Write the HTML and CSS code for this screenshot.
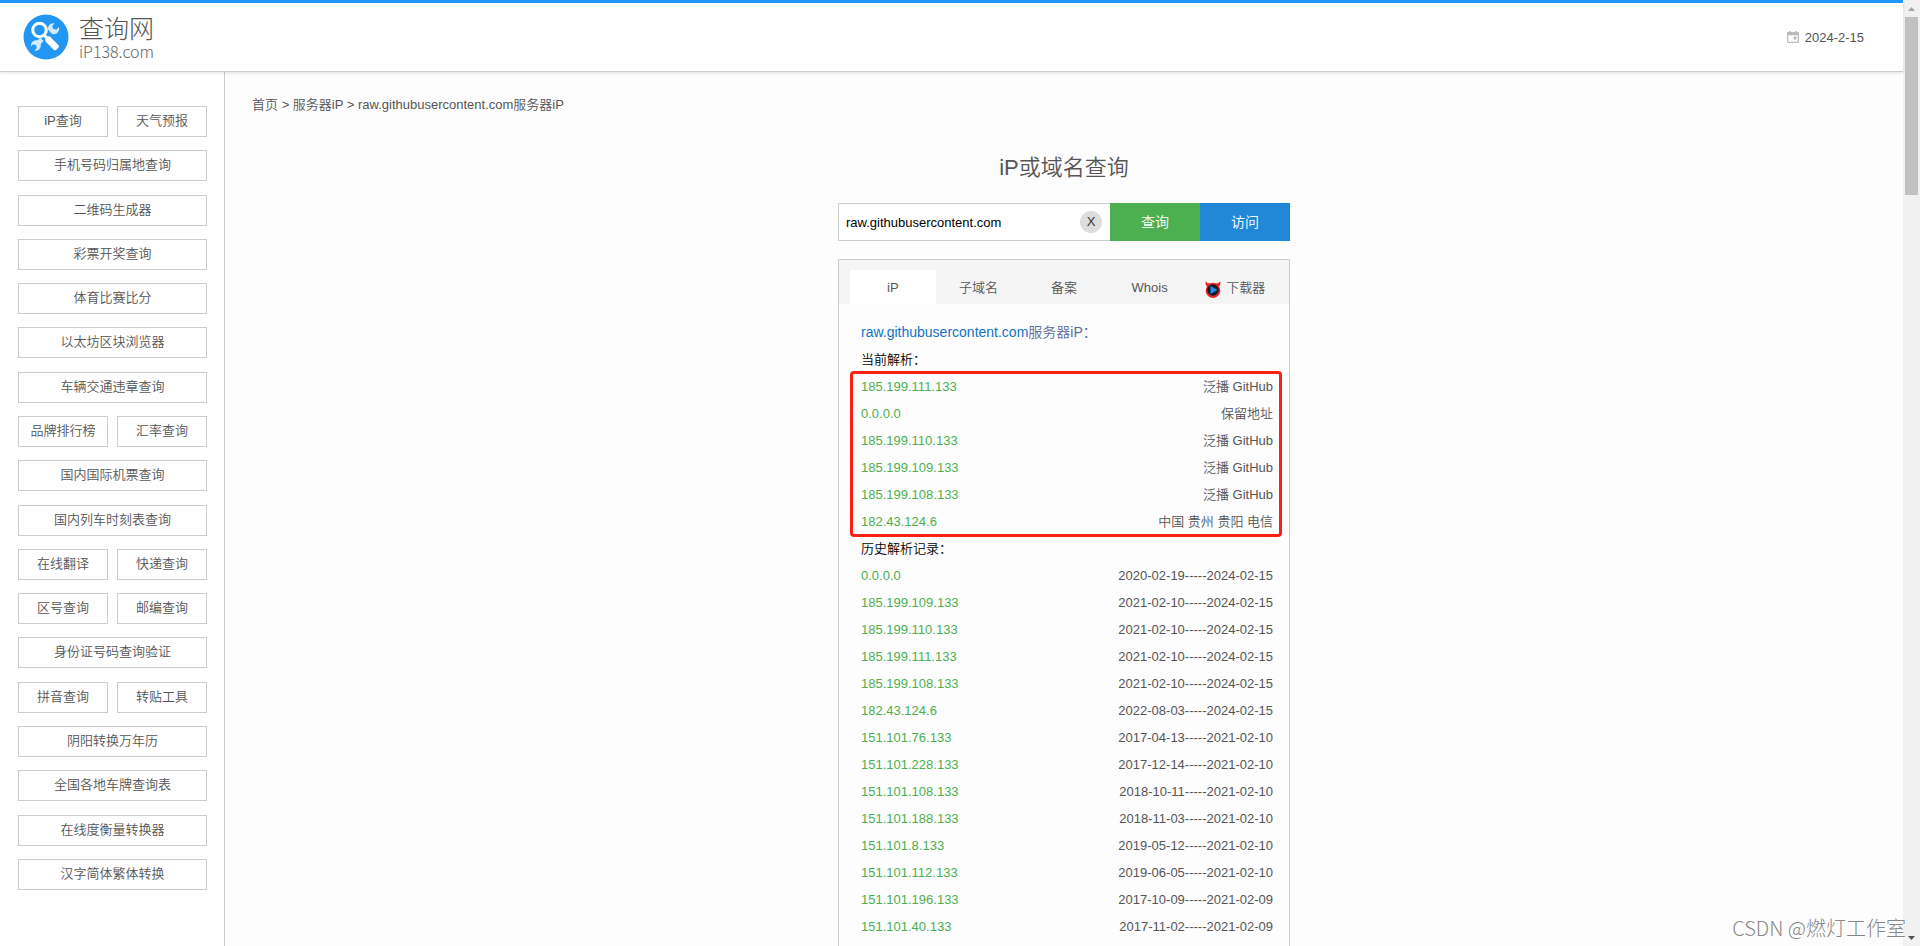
FILE: index.html
```html
<!DOCTYPE html>
<html lang="zh-CN">
<head>
<meta charset="utf-8">
<title>iP或域名查询</title>
<link rel="stylesheet" href="styles.css">
</head>
<body>
<div class="window">
  <div class="page">
    <header class="header">
      <a class="logo" href="#">
        <svg class="logo-mark" viewBox="0 0 46 46" aria-hidden="true">
          <circle cx="23" cy="23" r="22.5" fill="#2196f3"/>
          <path fill="#d3eafd" d="M28 19L25 15.500C24.500 11.500 28 8.500 31.500 9.300L29.300 12L30.200 15L33.500 15.500L36 13C37 17 34 20.500 30 20.200zM20.500 27L17.800 30C18.500 34 15.500 37.300 11.500 36.800L13.800 34L13 31L9.500 30.500L8 32.500C7.500 28.500 10.500 25.800 14.500 26.300L17.500 23.800z"/>
          <circle cx="16.500" cy="16" r="6.800" fill="none" stroke="#fff" stroke-width="3"/>
          <path fill="#fff" d="M20.300 21.700L22 20L24.500 22.300L27 22.500L35.800 31.500Q36.300 32.500 35.500 33.500L33 36Q32 36.700 31 36L22.500 27.500L22.300 25z"/>
        </svg>
        <span class="logo-text">
          <span class="logo-name">查询网</span>
          <span class="logo-domain">iP138.com</span>
        </span>
      </a>
      <div class="date">
        <svg class="date-icon" viewBox="0 0 12 12" aria-hidden="true">
          <path fill="#bbb" fill-rule="evenodd" d="M2 0h1.500v1h5V0H10v1h1a1 1 0 0 1 1 1v9a1 1 0 0 1-1 1H1a1 1 0 0 1-1-1V2a1 1 0 0 1 1-1h1zM1.200 4.200v6.600h9.600V4.200z"/>
          <path fill="#bbb" d="M6.500 5.500h3v3h-3z"/>
        </svg>
        <time datetime="2024-02-15">2024-2-15</time>
      </div>
    </header>
    <div class="columns">
      <nav class="sidebar">
        <a class="tool" href="#">iP查询</a><a class="tool" href="#">天气预报</a>
        <a class="tool wide" href="#">手机号码归属地查询</a>
        <a class="tool wide" href="#">二维码生成器</a>
        <a class="tool wide" href="#">彩票开奖查询</a>
        <a class="tool wide" href="#">体育比赛比分</a>
        <a class="tool wide" href="#">以太坊区块浏览器</a>
        <a class="tool wide" href="#">车辆交通违章查询</a>
        <a class="tool" href="#">品牌排行榜</a><a class="tool" href="#">汇率查询</a>
        <a class="tool wide" href="#">国内国际机票查询</a>
        <a class="tool wide" href="#">国内列车时刻表查询</a>
        <a class="tool" href="#">在线翻译</a><a class="tool" href="#">快递查询</a>
        <a class="tool" href="#">区号查询</a><a class="tool" href="#">邮编查询</a>
        <a class="tool wide" href="#">身份证号码查询验证</a>
        <a class="tool" href="#">拼音查询</a><a class="tool" href="#">转贴工具</a>
        <a class="tool wide" href="#">阴阳转换万年历</a>
        <a class="tool wide" href="#">全国各地车牌查询表</a>
        <a class="tool wide" href="#">在线度衡量转换器</a>
        <a class="tool wide" href="#">汉字简体繁体转换</a>
      </nav>
      <main class="main">
        <div class="breadcrumb"><a href="#">首页</a> &gt; <a href="#">服务器iP</a> &gt; raw.githubusercontent.com服务器iP</div>
        <div class="content">
          <h1 class="title">iP或域名查询</h1>
          <form class="search">
            <div class="search-field">
              <input class="search-input" type="text" aria-label="iP或域名" value="raw.githubusercontent.com">
              <button class="search-clear" type="reset">X</button>
            </div>
            <button class="search-button" type="button">查询</button>
            <button class="search-button visit" type="button">访问</button>
          </form>
          <section class="panel">
            <nav class="tabs">
              <a class="tab active" href="#">iP</a>
              <a class="tab" href="#">子域名</a>
              <a class="tab" href="#">备案</a>
              <a class="tab" href="#">Whois</a>
              <a class="tab" href="#">
                <svg class="devil" viewBox="0 0 16 18" aria-hidden="true">
                  <path fill="#ee2328" d="M1 1C1.500 3 3 3.500 5 3.200Q8 2.400 11 3.200C13 3.500 14.500 3 15 1Q16.300 4.500 14 6.500A7.300 7.300 0 1 1 2 6.500Q-.3 4.500 1 1z"/>
                  <circle cx="8" cy="10" r="5.800" fill="#151a22"/>
                  <path fill="#178df5" d="M5.500 6L12.500 10l-7 4z"/>
                </svg>下载器</a>
            </nav>
            <div class="results">
              <h2 class="results-title"><a href="#">raw.githubusercontent.com</a>服务器iP：</h2>
              <h3 class="results-label">当前解析：</h3>
              <div class="current">
                <table class="records">
                  <tr><td><a href="#">185.199.111.133</a></td><td>泛播 GitHub</td></tr>
                  <tr><td><a href="#">0.0.0.0</a></td><td>保留地址</td></tr>
                  <tr><td><a href="#">185.199.110.133</a></td><td>泛播 GitHub</td></tr>
                  <tr><td><a href="#">185.199.109.133</a></td><td>泛播 GitHub</td></tr>
                  <tr><td><a href="#">185.199.108.133</a></td><td>泛播 GitHub</td></tr>
                  <tr><td><a href="#">182.43.124.6</a></td><td>中国 贵州 贵阳 电信</td></tr>
                </table>
              </div>
              <h3 class="results-label">历史解析记录：</h3>
              <table class="records">
                <tr><td><a href="#">0.0.0.0</a></td><td>2020-02-19-----2024-02-15</td></tr>
                <tr><td><a href="#">185.199.109.133</a></td><td>2021-02-10-----2024-02-15</td></tr>
                <tr><td><a href="#">185.199.110.133</a></td><td>2021-02-10-----2024-02-15</td></tr>
                <tr><td><a href="#">185.199.111.133</a></td><td>2021-02-10-----2024-02-15</td></tr>
                <tr><td><a href="#">185.199.108.133</a></td><td>2021-02-10-----2024-02-15</td></tr>
                <tr><td><a href="#">182.43.124.6</a></td><td>2022-08-03-----2024-02-15</td></tr>
                <tr><td><a href="#">151.101.76.133</a></td><td>2017-04-13-----2021-02-10</td></tr>
                <tr><td><a href="#">151.101.228.133</a></td><td>2017-12-14-----2021-02-10</td></tr>
                <tr><td><a href="#">151.101.108.133</a></td><td>2018-10-11-----2021-02-10</td></tr>
                <tr><td><a href="#">151.101.188.133</a></td><td>2018-11-03-----2021-02-10</td></tr>
                <tr><td><a href="#">151.101.8.133</a></td><td>2019-05-12-----2021-02-10</td></tr>
                <tr><td><a href="#">151.101.112.133</a></td><td>2019-06-05-----2021-02-10</td></tr>
                <tr><td><a href="#">151.101.196.133</a></td><td>2017-10-09-----2021-02-09</td></tr>
                <tr><td><a href="#">151.101.40.133</a></td><td>2017-11-02-----2021-02-09</td></tr>
              </table>
            </div>
          </section>
        </div>
      </main>
    </div>
  </div>
  <div class="scrollbar" aria-hidden="true">
    <svg class="arrow" viewBox="0 0 17 17"><path fill="#a3a3a3" d="M5 11h7L8.500 7z"/></svg>
    <div class="thumb"></div>
    <svg class="arrow" viewBox="0 0 17 17"><path fill="#505050" d="M5 7h7l-3.500 4z"/></svg>
  </div>
  <div class="watermark">CSDN @燃灯工作室</div>
</div>
</body>
</html>
```
FILE: styles.css
```css
* {
  box-sizing: border-box;
}

body {
  margin: 0;
  color: #555;
  background: #fdfdfd;
  font: 350 13px/27px "Liberation Sans", "Noto Sans CJK SC", sans-serif;
}

a {
  color: inherit;
  text-decoration: none;
}

button,
input {
  margin: 0;
  border: 0;
  padding: 0;
  font: inherit;
}

.window {
  position: relative;
  display: flex;
  height: 100vh;
  overflow: hidden;
}

.page {
  flex: 1;
  display: flex;
  flex-direction: column;
  min-width: 0;
}

/* Header */
.header {
  position: relative;
  display: flex;
  justify-content: space-between;
  flex: none;
  padding: 10px 39px 10px 23px;
  border-top: 3px solid #2196f3;
  border-bottom: 1px solid #ccc;
  background: #fff;
  box-shadow: 0 1px 3px rgba(0, 0, 0, .12);
}

.logo {
  display: flex;
  align-items: center;
  gap: 10px;
}

.logo-mark {
  width: 46px;
  height: 46px;
}

.logo-text {
  display: flex;
  flex-direction: column;
  font-family: "Noto Sans CJK SC", sans-serif;
  font-weight: 300;
}

.logo-name {
  font-size: 25px;
  line-height: 28px;
}

.logo-domain {
  color: #666;
  font-size: 16px;
  line-height: 20px;
}

.date {
  display: flex;
  align-items: center;
  gap: 6px;
}

.date-icon {
  width: 12px;
  height: 12px;
}

/* Sidebar */
.columns {
  flex: 1;
  display: flex;
  min-height: 0;
}

.sidebar {
  flex: none;
  display: grid;
  grid-template-columns: 90px 90px;
  align-content: space-between;
  column-gap: 9px;
  padding: 34px 17px 56px 18px;
  border-right: 1px solid #ccc;
  background: #fff;
}

.tool {
  border: 1px solid #ccc;
  padding-bottom: 2px;
  line-height: 27px;
  text-align: center;
}

.wide {
  grid-column: span 2;
}

/* Main column */
.main {
  flex: 1;
  display: flex;
  flex-direction: column;
  padding-top: 19px;
}

.breadcrumb {
  padding: 0 27px;
}

.content {
  flex: 1;
  display: flex;
  flex-direction: column;
  align-self: center;
  width: 452px;
  padding-top: 34px;
  min-height: 0;
}

.title {
  margin: 0 0 19px;
  font-size: 22px;
  line-height: 32px;
  font-weight: 350;
  text-align: center;
}

.search {
  flex: none;
  display: flex;
  height: 38px;
  margin-bottom: 18px;
}

.search-field {
  position: relative;
  flex: 1;
}

.search-input {
  width: 100%;
  height: 100%;
  padding: 0 40px 0 7px;
  border: 1px solid #ccc;
  border-right: 0;
  background: #fff;
  color: #000;
}

.search-clear {
  position: absolute;
  top: 8px;
  right: 8px;
  width: 22px;
  height: 22px;
  border-radius: 11px;
  background: #ddd;
  color: #333;
  line-height: 22px;
}

.search-button {
  width: 90px;
  background: #4caf50;
  color: #fff;
  font-size: 14px;
}

.visit {
  background: #2188d8;
}

/* Result panel */
.panel {
  flex: none;
  min-height: 100%;
  border: 1px solid #ccc;
}

.tabs {
  display: grid;
  grid-template-columns: repeat(5, 1fr);
  padding: 10px 11px 0;
  background: #f5f5f5;
}

.tab {
  display: flex;
  align-items: center;
  justify-content: center;
  gap: 5px;
  height: 34px;
}

.active {
  background: #fff;
}

.devil {
  width: 16px;
  height: 18px;
  margin-top: 4px;
}

.results {
  padding: 15px 16px 15px 22px;
}

.results-title,
.results-label {
  margin: 0;
  font-weight: 350;
}

.results-title {
  color: #5b6b95;
  font-size: 14px;
}

.results-title a {
  color: #1273c4;
}

.results-label {
  color: #000;
  font-size: 13px;
}

.records {
  width: 100%;
  border-collapse: collapse;
}

.records td {
  padding: 0;
}

.records td:last-child {
  text-align: right;
}

.records a {
  color: #4caf50;
}

.current {
  position: relative;
}

.current::after {
  content: "";
  position: absolute;
  inset: -2px -9px -2px -11px;
  border: 3px solid #fd2015;
  border-radius: 4px;
  pointer-events: none;
}

/* Scrollbar */
.scrollbar {
  flex: none;
  display: flex;
  flex-direction: column;
  width: 17px;
  background: #f1f1f1;
}

.arrow {
  width: 17px;
  height: 17px;
}

.thumb {
  height: 178px;
  margin: 0 2px auto;
  background: #c1c1c1;
}

.watermark {
  position: absolute;
  right: 14px;
  bottom: 4px;
  color: #888;
  font: 300 20px/28px "Noto Sans CJK SC", sans-serif;
  text-shadow: 1px 1px 0 #fff;
}
```
